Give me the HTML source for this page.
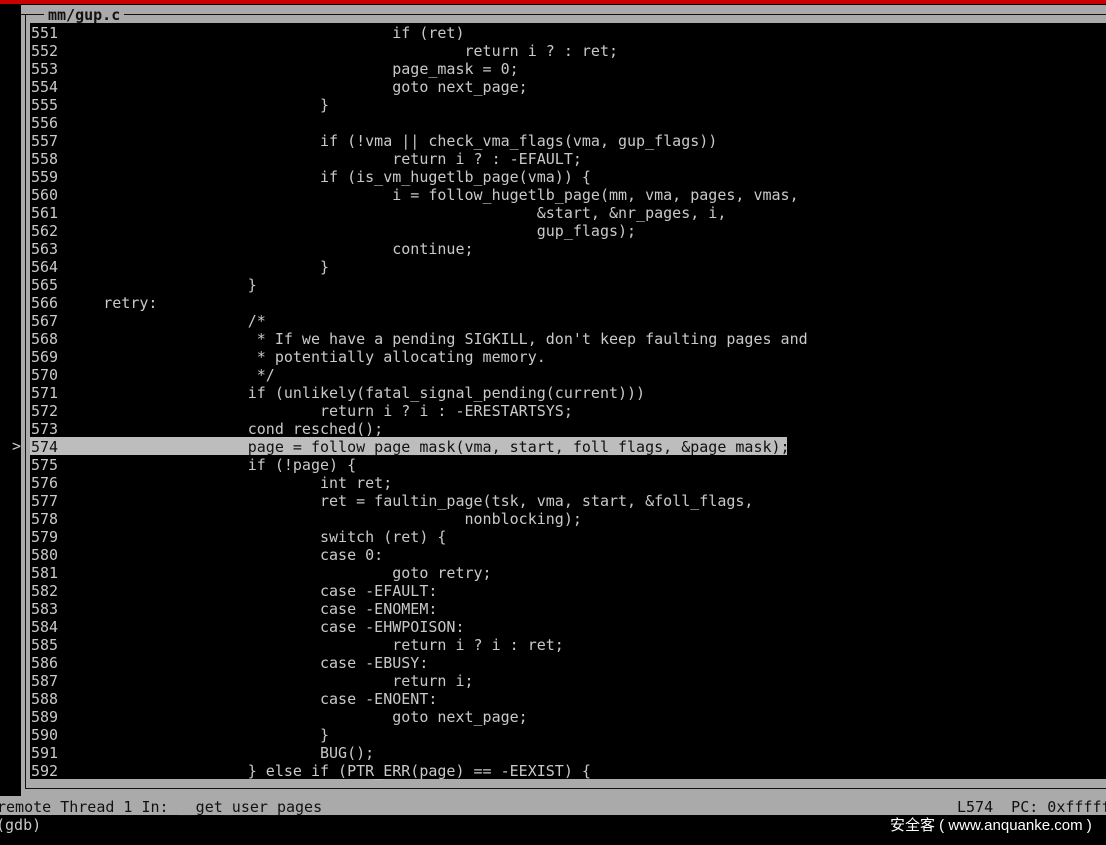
<!DOCTYPE html>
<html><head><meta charset="utf-8"><style>
html,body{margin:0;padding:0;background:#000;width:1106px;height:845px;overflow:hidden;position:relative;font-family:"DejaVu Sans Mono","Liberation Mono",monospace;}
.a{position:absolute}
pre{margin:0;font:15px/18px "DejaVu Sans Mono","Liberation Mono",monospace;color:#c9c9c9;white-space:pre;}
</style></head><body>
<div class="a" style="left:0;top:0;width:1106px;height:4px;background:#c80000"></div>
<div class="a" style="left:21px;top:5px;width:1085px;height:791px;background:#aaa"></div>
<div class="a" style="left:21px;top:14px;width:1085px;height:1px;background:#111"></div>
<div class="a" style="left:25px;top:14px;width:1px;height:775px;background:#111"></div>
<div class="a" style="left:25px;top:788px;width:1081px;height:1px;background:#111"></div>
<div class="a" style="left:44px;top:6px;background:#aaa;padding:0 4px;font:bold 15px/18px 'DejaVu Sans Mono',monospace;color:#111">mm/gup.c</div>
<div class="a" style="left:30px;top:23px;width:1076px;height:756px;background:#000"></div>
<div class="a" style="left:30px;top:437px;width:757px;height:18px;background:#bdbdbd"></div>
<pre class="a" style="left:12px;top:437px;color:#c9c9c9">&gt;</pre>
<pre class="a" style="left:31px;top:24px">551                                     if (ret)
552                                             return i ? : ret;
553                                     page_mask = 0;
554                                     goto next_page;
555                             }
556
557                             if (!vma || check_vma_flags(vma, gup_flags))
558                                     return i ? : -EFAULT;
559                             if (is_vm_hugetlb_page(vma)) {
560                                     i = follow_hugetlb_page(mm, vma, pages, vmas,
561                                                     &amp;start, &amp;nr_pages, i,
562                                                     gup_flags);
563                                     continue;
564                             }
565                     }
566     retry:
567                     /*
568                      * If we have a pending SIGKILL, don't keep faulting pages and
569                      * potentially allocating memory.
570                      */
571                     if (unlikely(fatal_signal_pending(current)))
572                             return i ? i : -ERESTARTSYS;
573                     cond_resched();
<span style="color:#111">574                     page = follow_page_mask(vma, start, foll_flags, &amp;page_mask);</span>
575                     if (!page) {
576                             int ret;
577                             ret = faultin_page(tsk, vma, start, &amp;foll_flags,
578                                             nonblocking);
579                             switch (ret) {
580                             case 0:
581                                     goto retry;
582                             case -EFAULT:
583                             case -ENOMEM:
584                             case -EHWPOISON:
585                                     return i ? i : ret;
586                             case -EBUSY:
587                                     return i;
588                             case -ENOENT:
589                                     goto next_page;
590                             }
591                             BUG();
592                     } else if (PTR_ERR(page) == -EEXIST) {</pre>
<div class="a" style="left:0;top:796px;width:1106px;height:19px;background:#aaa"></div>
<pre class="a" style="left:-3px;top:798px;color:#111">remote Thread 1 In: __get_user_pages</pre>
<pre class="a" style="left:957px;top:798px;color:#111">L574  PC: 0xfffff</pre>
<pre class="a" style="left:-4px;top:816px">(gdb)</pre>
<div class="a" style="left:890px;top:816px;font:15px/20px 'Liberation Sans','Noto Sans CJK SC',sans-serif;color:#fff">安全客 ( www.anquanke.com )</div>
</body></html>
